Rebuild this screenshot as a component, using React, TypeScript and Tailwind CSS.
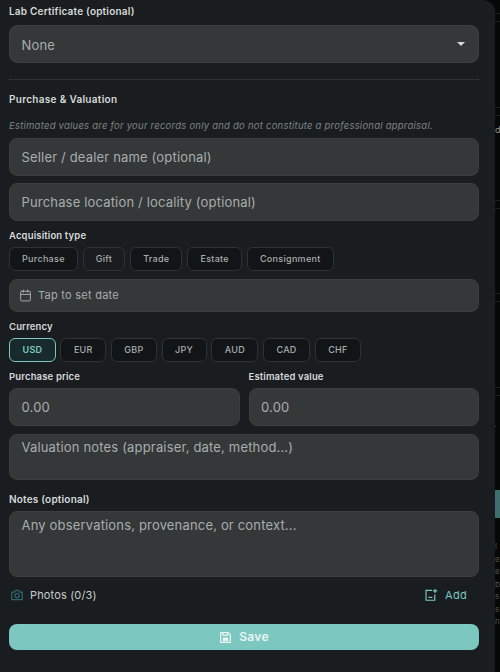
import { Calendar } from "lucide-react";

const acquisitionTypes = ["Purchase", "Gift", "Trade", "Estate", "Consignment"];
const currencies = ["USD", "EUR", "GBP", "JPY", "AUD", "CAD", "CHF"];

// lines of the page behind the sheet, seen along the right edge
const backdropLines = [13, 21, 107, 115, 200, 208, 293, 301, 387, 395];
const backdropText = ["l", "e", "e", "b", "s", "s", "n"];

const labelClass = "text-[10px] leading-[14px] font-semibold tracking-[0.2px] text-[#d6d9da]";
const smallLabelClass = "text-[9.5px] leading-[14px] font-semibold tracking-[0.15px] text-[#d6d9da]";
const fieldClass = "flex bg-[#343839] border border-[#3a3e3f] rounded-lg text-[#a9adad]";
const inputClass = `${fieldClass} px-[11.5px] text-[13px] tracking-[0.17px]`;
const chipClass = "h-[24px] flex items-center rounded-md border text-[9px] tracking-[0.3px]";

function Chip({ label, active, wide }: { label: string; active?: boolean; wide?: boolean }) {
  const idle = label === "Gift" ? "bg-[#191d1f]" : "bg-[#111517]";
  return (
    <div
      className={`${chipClass} ${wide ? "px-[12.5px]" : "px-[12px]"} ${
        active
          ? "border-[#7cc8c0] bg-[#182a2b] font-semibold text-[#7cc8c0]"
          : `border-[#2e3334] ${idle} font-medium text-[#a9adad]`
      }`}
    >
      {label}
    </div>
  );
}

function CameraIcon() {
  return (
    <svg width="14" height="14" viewBox="0 0 24 24" fill="none" stroke="#2f6a70" strokeWidth="2" strokeLinejoin="round">
      <path d="M3 7h5l1.5-3h5L16 7h5v13H3z" />
      <circle cx="12" cy="13" r="3.6" />
    </svg>
  );
}

function AddPhotoIcon() {
  return (
    <svg width="14" height="14" viewBox="0 0 24 24" fill="none" stroke="currentColor" strokeWidth="2">
      <path d="M14 4H3.5v17h15V11" />
      <path d="M19 1.5v7M15.5 5h7" />
      <path d="M7 17l2.5-3 2 2 1.5-1.5 2 2.5z" fill="currentColor" stroke="none" />
    </svg>
  );
}

function SaveIcon() {
  return (
    <svg width="13" height="13" viewBox="0 0 24 24" fill="none" stroke="currentColor" strokeWidth="2.2" strokeLinejoin="round">
      <path d="M3 3h14l4 4v14H3z" />
      <path d="M7 3v5h9V3" />
      <rect x="8" y="13" width="8" height="5" fill="currentColor" />
    </svg>
  );
}

function Backdrop() {
  return (
    <div className="relative flex-1 h-full overflow-hidden font-['Inter',sans-serif]">
      {backdropLines.map((y) => (
        <div key={y} className="absolute left-0 right-0 h-px bg-[#1c2021]" style={{ top: y }} />
      ))}
      <div className="absolute left-0 top-[124px] text-[9px] leading-[12px] text-[#8d9191]">d</div>
      <div className="absolute left-0 top-[426px] w-[1px] h-[1px] bg-[#3a3e3f]" />
      <div className="absolute left-0 right-0 top-[490px] h-[28px] bg-[#3f6e6c]" />
      <div className="absolute left-0 top-[540px] text-[8px] leading-[12.5px] text-[#4d5151]">
        {backdropText.map((t, i) => (
          <div key={i}>{t}</div>
        ))}
      </div>
    </div>
  );
}

export default function App() {
  return (
    <div className="w-[500px] h-[672px] overflow-hidden flex bg-[#060808] font-['Inter',sans-serif]">
      <div className="w-[495px] shrink-0 h-full bg-[#191d1f] rounded-tr-xl pl-[9px] pr-[16px] pt-[4px]">
        <div className={labelClass}>Lab Certificate (optional)</div>
        <div className={`${inputClass} h-[38px] mt-[7px] pt-[3px] items-center justify-between`}>
          <span>None</span>
          <span className="w-0 h-0 mr-[2px] mb-[3px] border-x-[4px] border-x-transparent border-t-[4px] border-t-[#d8dada]" />
        </div>

        <div className="h-px bg-[#2f3334] mt-[16px]" />
        <div className={`${labelClass} tracking-[0.3px] mt-[12px]`}>Purchase &amp; Valuation</div>
        <div className="mt-[13px] text-[9.5px] leading-[14px] italic tracking-[0.23px] text-[#7f8484]">
          Estimated values are for your records only and do not constitute a professional appraisal.
        </div>

        <div className={`${inputClass} h-[38px] mt-[5px] pt-[1px] items-center`}>Seller / dealer name (optional)</div>
        <div className={`${inputClass} h-[38px] mt-[7px] pt-[1px] items-center`}>Purchase location / locality (optional)</div>

        <div className={`${smallLabelClass} mt-[8px]`}>Acquisition type</div>
        <div className="flex gap-[5px] mt-[4px]">
          {acquisitionTypes.map((t) => (
            <Chip key={t} label={t} />
          ))}
        </div>

        <div className={`${fieldClass} h-[33px] mt-[8px] px-[9px] items-center gap-[6px] text-[11px] tracking-[0.25px]`}>
          <Calendar size={13} strokeWidth={1.75} />
          <span>Tap to set date</span>
        </div>

        <div className={`${smallLabelClass} mt-[8px]`}>Currency</div>
        <div className="flex gap-[4.5px] mt-[4px]">
          {currencies.map((c, i) => (
            <Chip key={c} label={c} active={i === 0} wide />
          ))}
        </div>

        <div className="flex gap-[9px] mt-[8px]">
          <div className="flex-1">
            <div className={smallLabelClass}>Purchase price</div>
            <div className={`${inputClass} h-[38px] mt-[4px] pt-[1px] items-center`}>0.00</div>
          </div>
          <div className="flex-1">
            <div className={smallLabelClass}>Estimated value</div>
            <div className={`${inputClass} h-[38px] mt-[4px] pt-[1px] items-center`}>0.00</div>
          </div>
        </div>

        <div className={`${inputClass} h-[46px] mt-[8px] pt-[3px]`}>Valuation notes (appraiser, date, method...)</div>

        <div className={`${labelClass} mt-[12px]`}>Notes (optional)</div>
        <div className={`${inputClass} h-[66px] mt-[5px] pt-[4px]`}>Any observations, provenance, or context...</div>

        <div className="flex items-center justify-between mt-[8px] h-[20px]">
          <div className="flex items-center gap-[6px] pl-[1px] text-[11px] tracking-[0.15px] text-[#c9cccc]">
            <CameraIcon />
            <span>Photos (0/3)</span>
          </div>
          <div className="flex items-center gap-[7px] pr-[12px] text-[11px] tracking-[0.3px] text-[#7cc8c0]">
            <AddPhotoIcon />
            <span>Add</span>
          </div>
        </div>

        <div className="h-[26px] mt-[19px] flex items-center justify-center gap-[7px] rounded-lg bg-[#7cc8c0] text-[12px] font-semibold tracking-[0.3px] text-[#eaf5f3]">
          <SaveIcon />
          <span>Save</span>
        </div>
      </div>
      <Backdrop />
    </div>
  );
}
